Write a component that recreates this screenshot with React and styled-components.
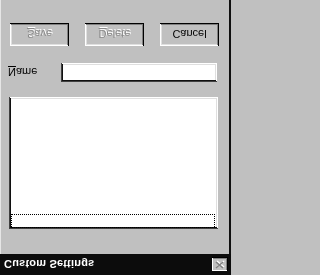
import React from "react";
import styled, { createGlobalStyle } from "styled-components";

const GlobalStyle = createGlobalStyle`
  html, body {
    margin: 0;
    padding: 0;
    background: #c0c0c0;
  }
  body {
    font-family: "Liberation Sans", Arial, sans-serif;
    font-size: 11px;
  }
`;

// the dialog is shown upside down in the screenshot
const Window = styled.div`
  width: 231px;
  height: 275px;
  display: flex;
  flex-direction: column;
  background: #c0c0c0;
  transform: scaleY(-1);
  overflow: hidden;
`;

const TitleBar = styled.div`
  height: 21px;
  flex-shrink: 0;
  background: #0c0c0c;
  display: flex;
  align-items: center;
  justify-content: space-between;
  padding: 0 3px 0 4px;
`;

const Title = styled.span`
  color: #fff;
  font-weight: bold;
  font-size: 11px;
  letter-spacing: 0.2px;
`;

const CloseButton = styled.button`
  width: 16px;
  height: 14px;
  padding: 0;
  border: none;
  background: #c0c0c0;
  box-shadow: inset -1px -1px #000, inset 1px 1px #fff, inset -2px -2px #808080;
  display: flex;
  align-items: center;
  justify-content: center;
`;

const Body = styled.div`
  flex: 1;
  display: flex;
  flex-direction: column;
  padding: 25px 0 0 8px;
  border-right: 2px solid #101010;
  border-left: 1px solid #e6e6e6;
`;

const ListBox = styled.div`
  width: 209px;
  height: 132px;
  box-sizing: border-box;
  background: #fff;
  box-shadow: inset 1px 1px #404040, inset -1px -1px #fff, inset 2px 2px #101010,
    inset -2px -2px #dfdfdf;
  padding: 1px 3px 0 2px;
`;

const ListItem = styled.div`
  height: 14px;
  box-sizing: border-box;
  border: 1px dotted ${(p) => (p.$focused ? "#000" : "transparent")};
`;

const FieldRow = styled.div`
  display: flex;
  align-items: center;
  margin-top: 15px;
`;

const Label = styled.label`
  width: 53px;
  color: #000;
  margin-left: -1px;
`;

const TextInput = styled.input`
  width: 156px;
  height: 19px;
  box-sizing: border-box;
  border: none;
  outline: none;
  background: #fff;
  font: inherit;
  box-shadow: inset 1px 1px #404040, inset -1px -1px #fff, inset 2px 2px #101010,
    inset -2px -2px #dfdfdf;
`;

const ButtonRow = styled.div`
  display: flex;
  gap: 16px;
  margin-top: 17px;
  padding-left: 1px;
`;

const Button = styled.button`
  width: 59px;
  height: 23px;
  padding: 0;
  border: none;
  background: #c0c0c0;
  font-family: "Liberation Sans", Arial, sans-serif;
  font-size: 11px;
  color: ${(p) => (p.disabled ? "#8a8a8a" : "#000")};
  text-shadow: ${(p) => (p.disabled ? "1px 1px #fff" : "none")};
  box-shadow: inset -1px -1px #000, inset 1px 1px #fff, inset -2px -2px #808080,
    inset 2px 2px #dfdfdf;
`;

const Key = styled.span`
  text-decoration: underline;
`;

function App() {
  return (
    <>
      <GlobalStyle />
      <Window>
        <TitleBar>
          <Title>Custom Settings</Title>
          <CloseButton>
            <svg width="10" height="9" viewBox="0 0 10 9">
              <path d="M2 2 L9 8 M9 2 L2 8" stroke="#fff" strokeWidth="1.6" />
              <path d="M1 1 L8 7 M8 1 L1 7" stroke="#808080" strokeWidth="1.6" />
            </svg>
          </CloseButton>
        </TitleBar>
        <Body>
          <ListBox>
            <ListItem $focused />
          </ListBox>
          <FieldRow>
            <Label>
              <Key>N</Key>ame
            </Label>
            <TextInput />
          </FieldRow>
          <ButtonRow>
            <Button disabled>
              <Key>S</Key>ave
            </Button>
            <Button disabled>
              <Key>D</Key>elete
            </Button>
            <Button>Cancel</Button>
          </ButtonRow>
        </Body>
      </Window>
    </>
  );
}

export default App;
